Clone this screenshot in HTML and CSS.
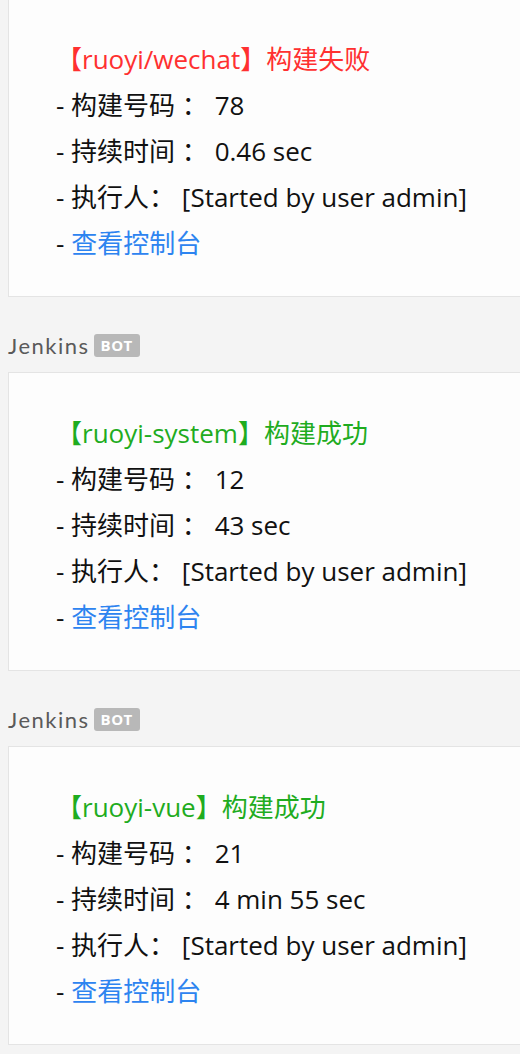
FILE: index.html
```html
<!DOCTYPE html>
<html lang="zh-CN">
<head>
<meta charset="utf-8">
<title>Jenkins</title>
<link rel="stylesheet" href="styles.css">
</head>
<body>
<div class="feed">
  <div class="card">
    <div class="line title fail">【ruoyi/wechat】构建失败</div>
    <div class="line">- 构建号码 ： 78</div>
    <div class="line">- 持续时间 ： 0.46 sec</div>
    <div class="line">- 执行人： [Started by user admin]</div>
    <div class="line">- <a class="link" href="#">查看控制台</a></div>
  </div>

  <div class="sender">Jenkins<span class="badge">BOT</span></div>
  <div class="card">
    <div class="line title ok">【ruoyi-system】构建成功</div>
    <div class="line">- 构建号码 ： 12</div>
    <div class="line">- 持续时间 ： 43 sec</div>
    <div class="line">- 执行人： [Started by user admin]</div>
    <div class="line">- <a class="link" href="#">查看控制台</a></div>
  </div>

  <div class="sender">Jenkins<span class="badge">BOT</span></div>
  <div class="card">
    <div class="line title ok">【ruoyi-vue】构建成功</div>
    <div class="line">- 构建号码 ： 21</div>
    <div class="line">- 持续时间 ： 4 min 55 sec</div>
    <div class="line">- 执行人： [Started by user admin]</div>
    <div class="line">- <a class="link" href="#">查看控制台</a></div>
  </div>
</div>
</body>
</html>
```

FILE: styles.css
```css
html, body {
  margin: 0;
  padding: 0;
  background: #f4f4f4;
}

body {
  font-family: "Open Sans", "Noto Sans CJK SC", sans-serif;
  color: #111;
}

.feed {
  display: flex;
  flex-direction: column;
  margin-top: -2px;
}

.card {
  margin-left: 8px;
  background: #fdfdfd;
  border: 1px solid #e4e4e4;
  border-right: none;
  padding: 37px 0 30px 47px;
  display: flex;
  flex-direction: column;
}

.line {
  font-size: 26px;
  line-height: 46px;
  height: 46px;
  white-space: nowrap;
}

.title.fail { color: #ff3030; }
.title.ok { color: #1fac1f; }

.link {
  color: #2d84f0;
  text-decoration: none;
}

.sender {
  margin: 34px 0 13px 8px;
  height: 28px;
  display: flex;
  align-items: center;
  font-family: "Lato", "Open Sans", sans-serif;
  font-size: 22px;
  letter-spacing: 1.5px;
  color: #5a5a5a;
}

.badge {
  margin-left: 4px;
  background: #b8b8b8;
  color: #fff;
  font-family: "Open Sans", sans-serif;
  font-weight: 700;
  font-size: 15px;
  letter-spacing: 0.5px;
  line-height: 23px;
  padding: 0 7px;
  border-radius: 3px;
}
```
